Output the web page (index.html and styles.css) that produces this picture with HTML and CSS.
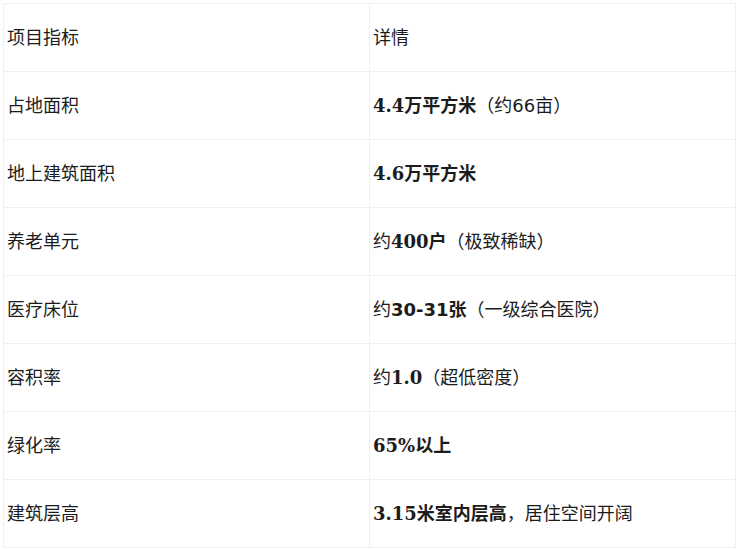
FILE: index.html
```html
<!DOCTYPE html>
<html lang="zh">
<head>
<meta charset="utf-8">
<link rel="stylesheet" href="styles.css">
</head>
<body>
<table class="spec">
  <tr><td>项目指标</td><td>详情</td></tr>
  <tr><td>占地面积</td><td><b>4.4万平方米</b>（约<span class="sans">66</span>亩）</td></tr>
  <tr><td>地上建筑面积</td><td><b>4.6万平方米</b></td></tr>
  <tr><td>养老单元</td><td>约<b>400户</b>（极致稀缺）</td></tr>
  <tr><td>医疗床位</td><td>约<b class="sans">30-31张</b>（一级综合医院）</td></tr>
  <tr><td>容积率</td><td>约<b>1.0</b>（超低密度）</td></tr>
  <tr><td>绿化率</td><td><b>65%以上</b></td></tr>
  <tr><td>建筑层高</td><td><b>3.15米室内层高</b>，居住空间开阔</td></tr>
</table>
</body>
</html>
```
FILE: styles.css
```css
html, body {
  margin: 0;
  background: #fff;
}
body {
  padding: 3px 4px 0 3px;
  font-family: "DejaVu Serif", "Noto Sans CJK SC", serif;
  font-size: 18px;
  color: #1c1c1c;
}
.spec {
  width: 100%;
  border-collapse: collapse;
  table-layout: fixed;
}
.spec td {
  border: 1px solid #efefef;
  height: 68px;
  padding: 0 3px;
  box-sizing: border-box;
  vertical-align: middle;
  line-height: 27px;
}
.spec b {
  font-weight: bold;
}
.sans {
  font-family: "DejaVu Sans", "Noto Sans CJK SC", sans-serif;
}
```
